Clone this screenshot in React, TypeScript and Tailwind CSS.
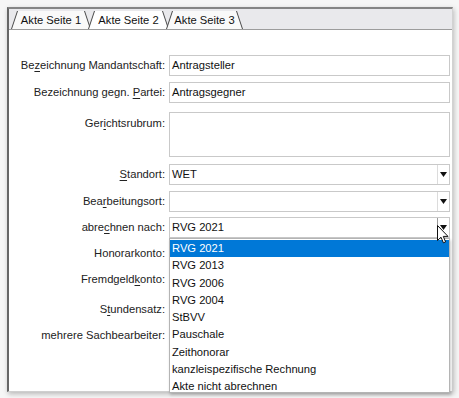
import React from 'react';

const font = "font-['Liberation_Sans',Arial,sans-serif]";

function Tab({ label, width, active = false }: { label: string; width: number; active?: boolean }) {
  return (
    <div className="relative -mr-[3px] h-[19px] flex items-center justify-center" style={{ width }}>
      <svg className="absolute inset-0" width={width} height={19} viewBox={`0 0 ${width} 19`}>
        <polygon
          points={`0.5,19 6.5,1 ${width - 6.5},1 ${width - 0.5},19`}
          fill={active ? '#ffffff' : '#f9f9f9'}
          stroke="none"
        />
        <line x1="0.5" y1="19" x2="6.5" y2="1" stroke="#4a4a4a" strokeWidth="1" />
        <line x1={width - 6.5} y1="1" x2={width - 0.5} y2="19" stroke="#4a4a4a" strokeWidth="1" />
      </svg>
      <span className="relative text-[11.2px] text-[#111] pt-[2px]">{label}</span>
    </div>
  );
}

function Label({ children, className = '' }: { children: React.ReactNode; className?: string }) {
  return (
    <div className={`w-[156px] shrink-0 h-[21px] leading-[21px] text-right text-[11.2px] text-[#222] ${className}`}>
      {children}
    </div>
  );
}

function U({ children }: { children: React.ReactNode }) {
  return <span className="underline underline-offset-[2px]">{children}</span>;
}

function TextInput({ value = '' }: { value?: string }) {
  return (
    <div className="w-[281px] h-[21px] border border-[#c9c9c9] bg-white pl-[2px] leading-[19px] text-[11.2px] text-[#111]">
      {value}
    </div>
  );
}

function Select({ value = '', active = false }: { value?: string; active?: boolean }) {
  return (
    <div className="w-[281px] h-[21px] border border-[#c9c9c9] bg-white flex">
      <div className="flex-1 pl-[2px] leading-[19px] text-[11.2px] text-[#111]">{value}</div>
      <div
        className={`w-[12px] border-l flex items-center justify-center ${
          active ? 'border-[#9a9a9a]' : 'border-[#dcdcdc]'
        }`}
      >
        <svg width="7" height="5" viewBox="0 0 7 5">
          <polygon points="0,0 7,0 3.5,5" fill="#111" />
        </svg>
      </div>
    </div>
  );
}

const options = [
  'RVG 2021',
  'RVG 2013',
  'RVG 2006',
  'RVG 2004',
  'StBVV',
  'Pauschale',
  'Zeithonorar',
  'kanzleispezifische Rechnung',
  'Akte nicht abrechnen',
];

export default function App() {
  return (
    <div className={`w-[459px] h-[398px] bg-[#f6f6f6] pt-[7px] pl-[7px] overflow-hidden ${font}`}>
      <div className="relative w-[446px] h-[385px] bg-white border-l-2 border-l-[#666] border-t-2 border-t-[#858585] border-r border-r-[#d2d2d2] border-b border-b-[#cfcfcf] shadow-[1px_2px_5px_rgba(0,0,0,0.25)]">
        {/* tab strip */}
        <div className="h-[21px] bg-[#e9e9ec] border-b border-[#9c9c9c] flex items-end pl-[2px]">
          <Tab label="Akte Seite 1" width={80} />
          <Tab label="Akte Seite 2" width={81} active />
          <Tab label="Akte Seite 3" width={77} />
        </div>

        {/* form */}
        <div className="pt-[25px] flex flex-col">
          <div className="flex gap-[4px]">
            <Label>
              Be<U>z</U>eichnung Mandantschaft:
            </Label>
            <TextInput value="Antragsteller" />
          </div>
          <div className="flex gap-[4px] mt-[5.5px]">
            <Label>
              Bezeichnung gegn. <U>P</U>artei:
            </Label>
            <TextInput value="Antragsgegner" />
          </div>
          <div className="flex gap-[4px] mt-[9px]">
            <Label className="mt-[1px]">
              Ger<U>i</U>chtsrubrum:
            </Label>
            <div className="w-[281px] h-[45px] border border-[#c9c9c9] bg-white" />
          </div>
          <div className="flex gap-[4px] mt-[7.5px]">
            <Label>
              <U>S</U>tandort:
            </Label>
            <Select value="WET" />
          </div>
          <div className="flex gap-[4px] mt-[6px]">
            <Label>
              Bea<U>r</U>beitungsort:
            </Label>
            <Select />
          </div>
          <div className="flex gap-[4px] mt-[5px]">
            <Label>
              abre<U>c</U>hnen nach:
            </Label>
            <Select value="RVG 2021" active />
          </div>
          <div className="flex gap-[4px] mt-[5px]">
            <Label>Honorarkonto:</Label>
          </div>
          <div className="flex gap-[4px] mt-[5px]">
            <Label>
              Fremdgeld<U>k</U>onto:
            </Label>
          </div>
          <div className="flex gap-[4px] mt-[9px]">
            <Label>
              S<U>t</U>undensatz:
            </Label>
          </div>
          <div className="flex gap-[4px] mt-[5px]">
            <Label>mehrere Sachbearbeiter:</Label>
          </div>
        </div>

        {/* open dropdown list */}
        <div className="absolute left-[160px] top-[229px] w-[281px] h-[155px] bg-white border border-[#b4b4b4] shadow-[1px_2px_3px_rgba(0,0,0,0.2)] pt-[1px]">
          {options.map((o, i) => (
            <div
              key={o}
              className={`h-[17.3px] leading-[17.3px] pl-[2px] text-[11.2px] ${
                i === 0 ? 'bg-[#0078d7] text-white' : 'text-[#111]'
              }`}
            >
              {o}
            </div>
          ))}
        </div>

        {/* mouse pointer */}
        <svg className="absolute left-[428px] top-[216px]" width="12" height="19" viewBox="0 0 12 19">
          <path
            d="M0.5 0.5 L0.5 15.5 L4 12.2 L6.4 17.8 L8.6 16.9 L6.3 11.4 L11 11.4 Z"
            fill="#fff"
            stroke="#111"
            strokeWidth="1"
            strokeLinejoin="round"
          />
        </svg>
      </div>
    </div>
  );
}
